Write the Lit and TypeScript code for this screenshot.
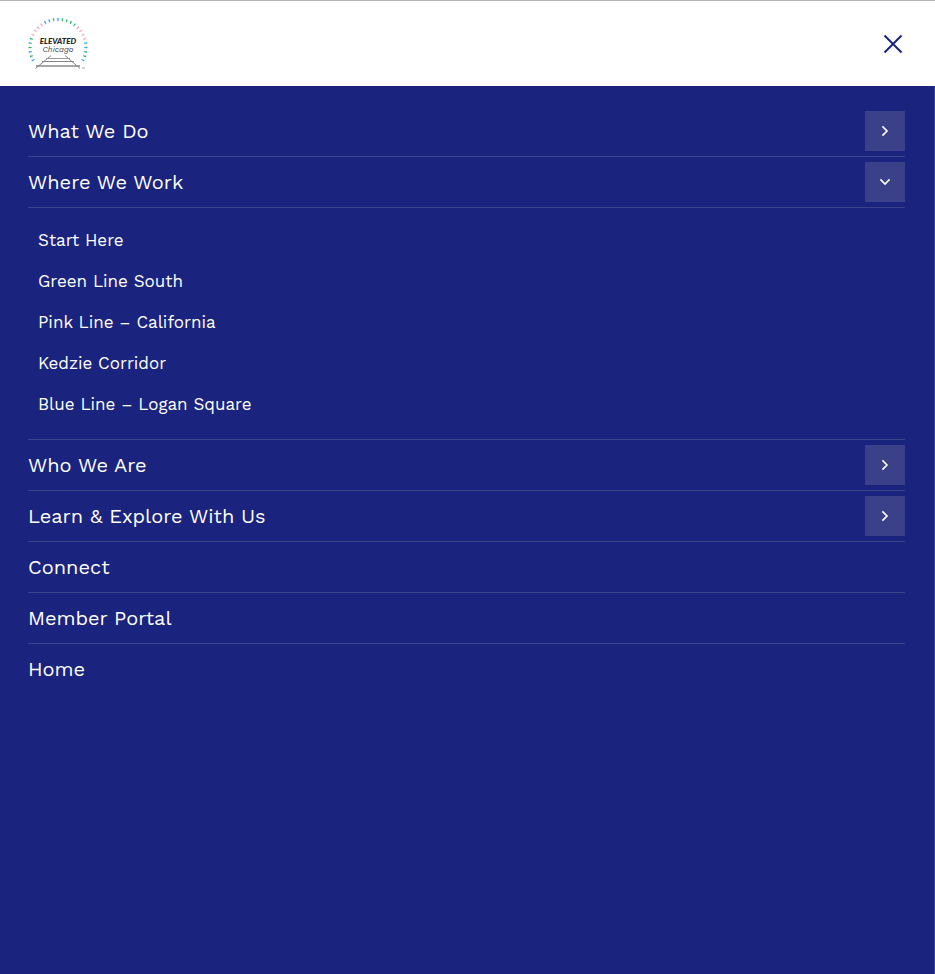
import { LitElement, html, svg, css, nothing } from "lit";
import { customElement, state } from "lit/decorators.js";
import { classMap } from "lit/directives/class-map.js";

interface Entry {
  label: string;
  children?: string[];
}

const ENTRIES: Entry[] = [
  { label: "What We Do", children: [] },
  {
    label: "Where We Work",
    children: [
      "Start Here",
      "Green Line South",
      "Pink Line – California",
      "Kedzie Corridor",
      "Blue Line – Logan Square",
    ],
  },
  { label: "Who We Are", children: [] },
  { label: "Learn & Explore With Us", children: [] },
  { label: "Connect" },
  { label: "Member Portal" },
  { label: "Home" },
];

const GREEN = "#2fb56f";
const BLUE = "#2aa8e4";
const PINK = "#f0a3c2";

// Ring of ticks, from lower left over the top to lower right.
const TICKS = [
  BLUE, GREEN, BLUE, GREEN, BLUE, GREEN, PINK, PINK, PINK, PINK,
  BLUE, BLUE, BLUE, BLUE, GREEN, GREEN, GREEN, GREEN, PINK, PINK,
  PINK, PINK, BLUE, BLUE, GREEN, GREEN, BLUE,
];

@customElement("elevated-logo")
export class ElevatedLogo extends LitElement {
  static styles = css`
    :host {
      display: block;
    }
    svg {
      display: block;
    }
    .name {
      font: italic 900 8px Lato, sans-serif;
      fill: #222;
    }
    .city {
      font: italic 400 8px "Work Sans", sans-serif;
      fill: #444;
    }
  `;

  render() {
    return html`
      <svg width="60" height="52" viewBox="0 0 60 52" role="img" aria-label="Elevated Chicago">
        ${TICKS.map(
          (color, i) => svg`<path d="M29.2 0H30.8L30.4 3.2H29.6Z" fill=${color}
            transform="rotate(${(i - 13) * 9} 30 29.5)"></path>`
        )}
        <text class="name" x="30" y="26" text-anchor="middle">ELEVATED</text>
        <text class="city" x="30" y="34" text-anchor="middle">Chicago</text>
        <g fill="none" stroke="#888" stroke-width="1">
          <path d="M23 37.5L7.5 50.5M37 37.5L52 50.5"></path>
          <path d="M18 40.5H42" stroke="#999"></path>
          <path d="M14 43.5H46"></path>
          <path d="M8 48H52" stroke-width="1.3"></path>
        </g>
        <path d="M54 50h3" stroke="#aaa" stroke-width="1"></path>
      </svg>
    `;
  }
}

@customElement("app-root")
export class AppRoot extends LitElement {
  @state() private open = 1;

  static styles = css`
    :host {
      display: flex;
      flex-direction: column;
      min-height: 100vh;
      font-family: "Work Sans", "Noto Sans", sans-serif;
      color: #fff;
    }
    * {
      box-sizing: border-box;
    }
    header {
      display: flex;
      align-items: center;
      justify-content: space-between;
      height: 86px;
      padding: 0 28px;
      border-top: 1px solid #b4b4b4;
      background: #fff;
    }
    a {
      color: inherit;
      text-decoration: none;
    }
    button {
      display: flex;
      align-items: center;
      justify-content: center;
      margin: 0;
      padding: 0;
      border: 0;
      cursor: pointer;
    }
    .close {
      width: 28px;
      height: 28px;
      background: none;
      color: #1a237e;
    }
    nav {
      flex: 1;
      padding: 20px 29px 20px 28px;
      border-right: 1px solid #3a449a;
      background: #1a237e;
    }
    ul {
      margin: 0;
      padding: 0;
      list-style: none;
    }
    .row,
    .sub {
      border-bottom: 1px solid #3c4489;
    }
    .row {
      display: flex;
      align-items: center;
      justify-content: space-between;
      height: 51px;
    }
    .row.last {
      height: 50px;
      border-bottom: 0;
    }
    .main {
      flex: 1;
      font-size: 20px;
      line-height: 50px;
    }
    .toggle {
      width: 40px;
      height: 40px;
      background: #3a4189;
      color: #fff;
    }
    .toggle.open svg {
      transform: rotate(90deg);
    }
    .sub {
      padding: 12px 0 14px 10px;
    }
    .sub a {
      display: block;
      font-size: 17px;
      line-height: 41px;
    }
  `;

  private toggle(i: number) {
    this.open = this.open === i ? -1 : i;
  }

  private entry(entry: Entry, i: number) {
    const open = this.open === i;
    return html`
      <li>
        <div class=${classMap({ row: true, last: i === ENTRIES.length - 1 })}>
          <a class="main" href="#">${entry.label}</a>
          ${entry.children
            ? html`<button
                class=${classMap({ toggle: true, open })}
                aria-label="Toggle ${entry.label}"
                aria-expanded=${open ? "true" : "false"}
                @click=${() => this.toggle(i)}
              >
                <svg width="12" height="12" viewBox="0 0 12 12" fill="none" stroke="currentColor" stroke-width="1.6">
                  <path d="M3.4 1.4L8 6L3.4 10.6"></path>
                </svg>
              </button>`
            : nothing}
        </div>
        ${open && entry.children?.length
          ? html`<ul class="sub">
              ${entry.children.map((c) => html`<li><a href="#">${c}</a></li>`)}
            </ul>`
          : nothing}
      </li>
    `;
  }

  render() {
    return html`
      <header>
        <a href="#"><elevated-logo></elevated-logo></a>
        <button class="close" aria-label="Close menu">
          <svg width="20" height="20" viewBox="0 0 20 20" fill="none" stroke="currentColor" stroke-width="2">
            <path d="M1.5 1.5L18.5 18.5M18.5 1.5L1.5 18.5"></path>
          </svg>
        </button>
      </header>
      <nav aria-label="Main">
        <ul>
          ${ENTRIES.map((e, i) => this.entry(e, i))}
        </ul>
      </nav>
    `;
  }
}
